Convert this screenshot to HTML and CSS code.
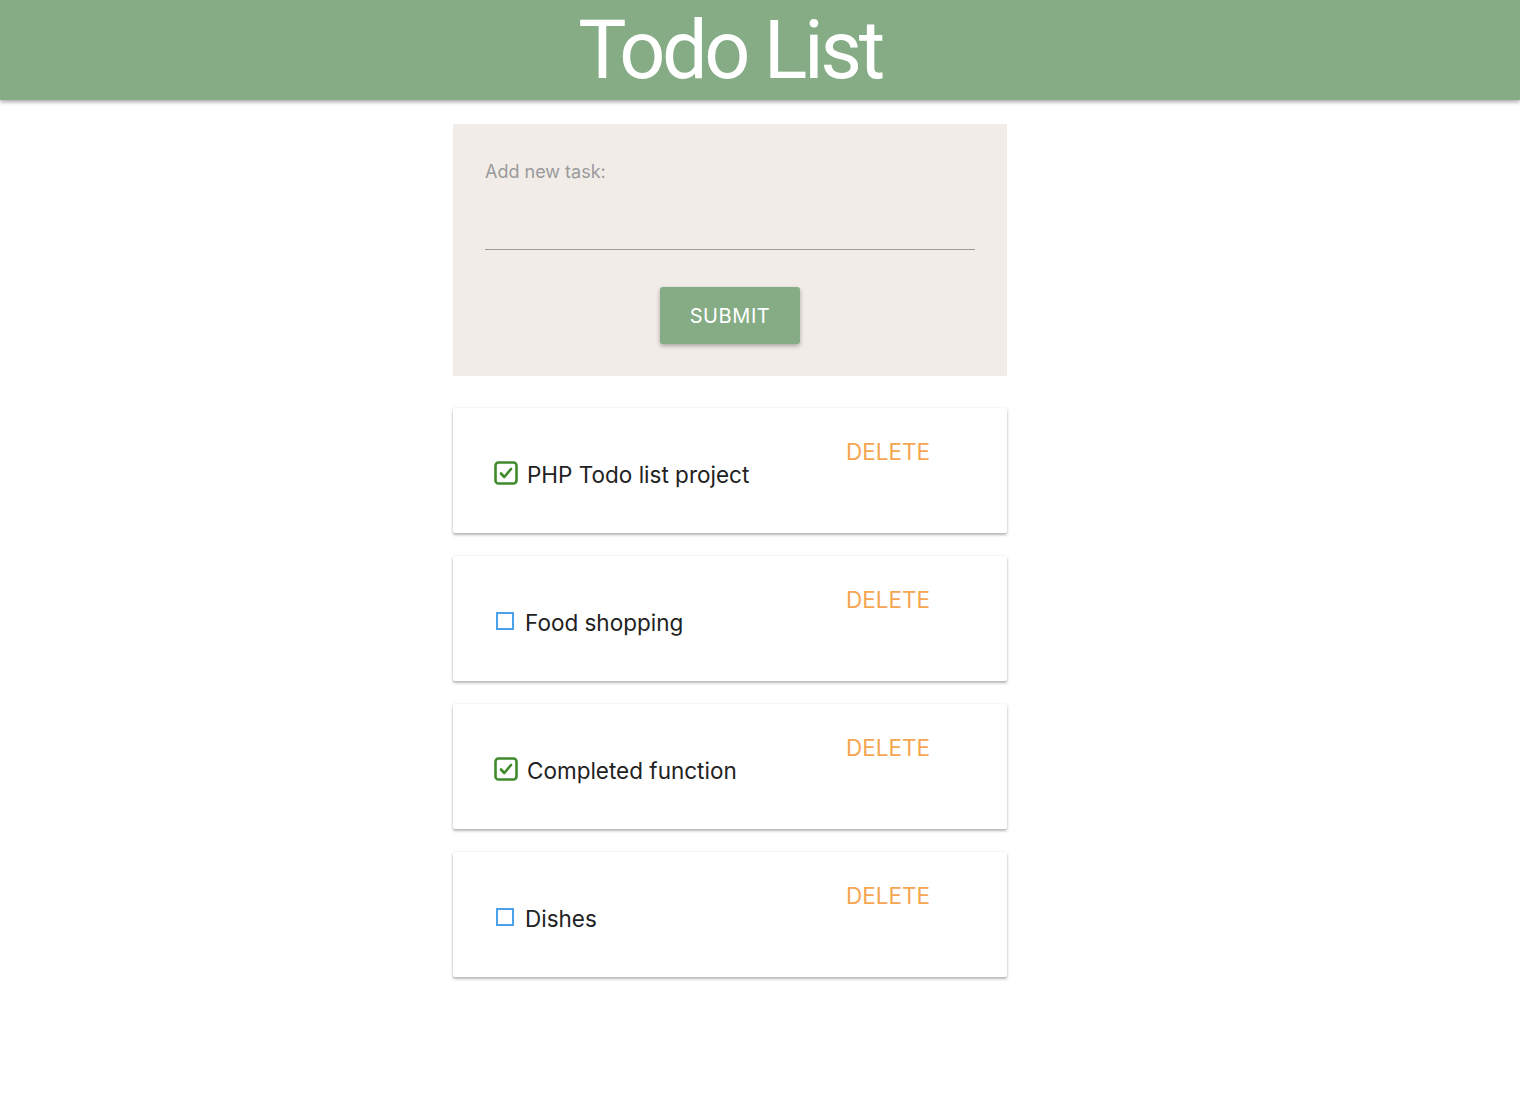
FILE: index.html
```html
<!DOCTYPE html>
<html lang="en">
<head>
<meta charset="utf-8">
<title>Todo List</title>
<link rel="stylesheet" href="styles.css">
</head>
<body>
<header class="topbar">
  <div class="page">
    <h1 class="title">Todo List</h1>
  </div>
</header>
<main class="page">
  <div class="column">
    <form class="add-form">
      <label class="add-label" for="task">Add new task:</label>
      <input class="add-input" id="task" type="text">
      <div class="btn-row"><button class="submit" type="button">SUBMIT</button></div>
    </form>

    <ul class="todos">
      <li class="card">
        <div class="card-main">
          <span class="box"><svg viewBox="0 0 24 24" width="24" height="24"><rect x="1.5" y="1.5" width="21" height="21" rx="3" fill="none" stroke="#3f8a2a" stroke-width="2.6"/><path d="M7 12.5l3.3 3.5L17 8" fill="none" stroke="#3f8a2a" stroke-width="2.6" stroke-linecap="round" stroke-linejoin="round"/></svg></span>
          <span class="task">PHP Todo list project</span>
        </div>
        <div class="card-side"><a class="delete" href="#">DELETE</a></div>
      </li>
      <li class="card">
        <div class="card-main">
          <span class="box open"><svg viewBox="0 0 24 24" width="24" height="24"><rect x="3" y="3" width="16" height="16" fill="none" stroke="#4aa3ea" stroke-width="2"/></svg></span>
          <span class="task">Food shopping</span>
        </div>
        <div class="card-side"><a class="delete" href="#">DELETE</a></div>
      </li>
      <li class="card">
        <div class="card-main">
          <span class="box"><svg viewBox="0 0 24 24" width="24" height="24"><rect x="1.5" y="1.5" width="21" height="21" rx="3" fill="none" stroke="#3f8a2a" stroke-width="2.6"/><path d="M7 12.5l3.3 3.5L17 8" fill="none" stroke="#3f8a2a" stroke-width="2.6" stroke-linecap="round" stroke-linejoin="round"/></svg></span>
          <span class="task">Completed function</span>
        </div>
        <div class="card-side"><a class="delete" href="#">DELETE</a></div>
      </li>
      <li class="card">
        <div class="card-main">
          <span class="box open"><svg viewBox="0 0 24 24" width="24" height="24"><rect x="3" y="3" width="16" height="16" fill="none" stroke="#4aa3ea" stroke-width="2"/></svg></span>
          <span class="task">Dishes</span>
        </div>
        <div class="card-side"><a class="delete" href="#">DELETE</a></div>
      </li>
    </ul>
  </div>
</main>
</body>
</html>
```

FILE: styles.css
```css
* { box-sizing: border-box; }
html, body { margin: 0; padding: 0; background: #fff; }
body { font-family: Inter, Roboto, "Noto Sans", sans-serif; color: #222; }

.page { padding-right: 60px; }

.topbar {
  background: #86ac86;
  height: 100px;
  box-shadow: 0 2px 4px rgba(0,0,0,0.35);
  position: relative;
  z-index: 1;
}
.title {
  margin: 0;
  text-align: center;
  color: #fff;
  font-family: Roboto, sans-serif;
  font-weight: 400;
  font-size: 81px;
  line-height: 102px;
  letter-spacing: -3.4px;
}

.column {
  width: 554px;
  margin: 24px auto 0;
}

.add-form {
  background: #f1ece8;
  height: 252px;
  padding: 38px 32px 0;
}
.add-label {
  display: block;
  color: #9a9a9a;
  font-size: 18px;
  line-height: 20px;
}
.add-input {
  display: block;
  width: 100%;
  height: 48px;
  margin-top: 20px;
  border: 0;
  border-bottom: 1px solid #9a9a9a;
  background: transparent;
  outline: none;
  font: inherit;
}
.btn-row { display: flex; justify-content: center; margin-top: 37px; }
.submit {
  width: 140px;
  height: 57px;
  background: #86ac86;
  color: #fff;
  border: 0;
  border-radius: 3px;
  font-family: Inter, Roboto, sans-serif;
  font-size: 20px;
  letter-spacing: 0.6px;
  box-shadow: 0 2px 4px rgba(0,0,0,0.3);
}

.todos { list-style: none; margin: 32px 0 0; padding: 0; }
.card {
  display: flex;
  height: 125px;
  margin-bottom: 23px;
  background: #fff;
  border-radius: 2px;
  box-shadow: 0 2px 3px rgba(0,0,0,0.28), 0 0 3px rgba(0,0,0,0.08);
}
.card-main {
  width: 354px;
  display: flex;
  align-items: center;
  padding: 8px 0 0 41px;
}
.box { display: inline-flex; width: 24px; height: 24px; margin-right: 9px; margin-top: -4px; }
.box.open { margin-right: 7px; margin-top: -2px; }
.task { font-size: 22.5px; color: #222; }
.card-side { flex: 1; padding: 31px 0 0 39px; }
.delete {
  color: #f5a650;
  text-decoration: none;
  font-size: 22.5px;
  line-height: 26px;
}
```
